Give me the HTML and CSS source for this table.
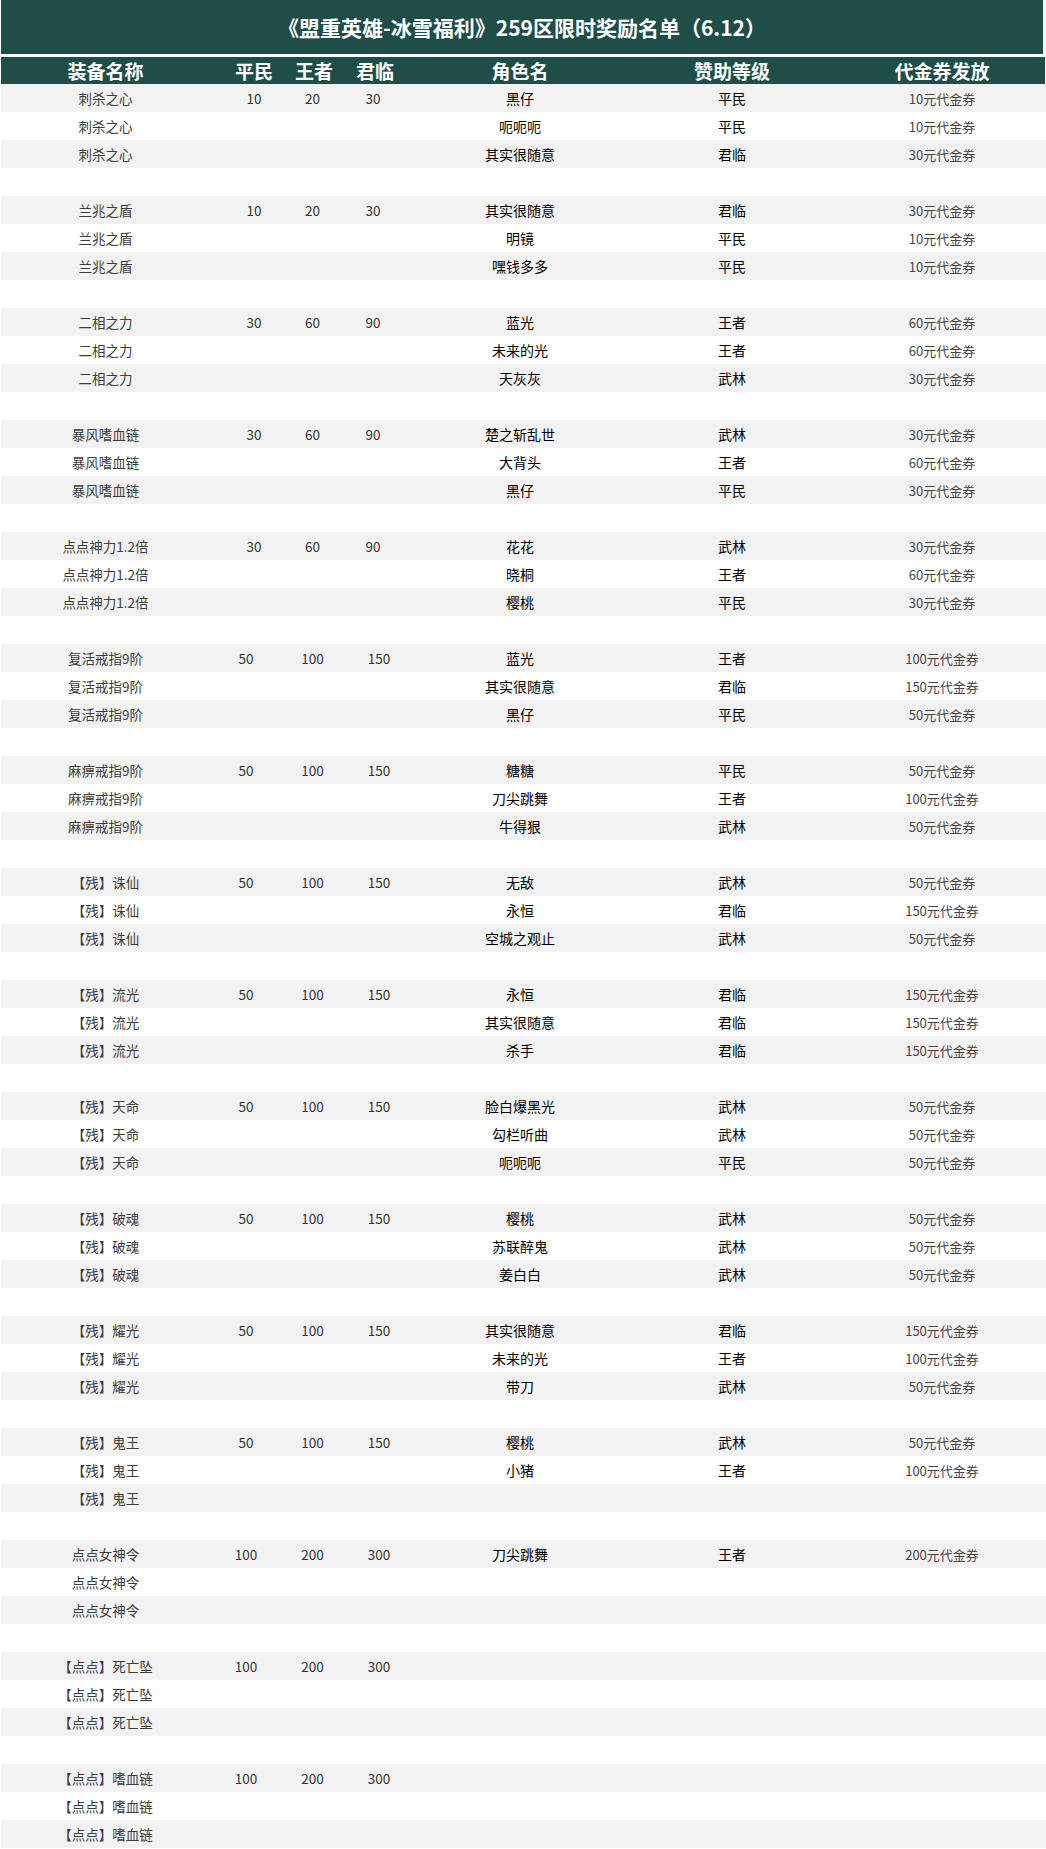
FILE: index.html
```html
<!DOCTYPE html>
<html lang="zh-CN">
<head>
<meta charset="utf-8">
<title>259区限时奖励名单</title>
<link rel="stylesheet" href="styles.css">
</head>
<body>
<div class="sheet">
  <div class="title">《盟重英雄-冰雪福利》259区限时奖励名单（6.12）</div>
  <div class="row head">
    <div class="c">装备名称</div><div class="c">平民</div><div class="c">王者</div><div class="c">君临</div><div class="c">角色名</div><div class="c">赞助等级</div><div class="c">代金券发放</div>
  </div>

  <div class="group">
    <div class="row"><div class="c item">刺杀之心</div><div class="c num">10</div><div class="c num">20</div><div class="c num">30</div><div class="c name">黑仔</div><div class="c name">平民</div><div class="c vou">10元代金券</div></div>
    <div class="row"><div class="c item">刺杀之心</div><div class="c num"></div><div class="c num"></div><div class="c num"></div><div class="c name">呃呃呃</div><div class="c name">平民</div><div class="c vou">10元代金券</div></div>
    <div class="row"><div class="c item">刺杀之心</div><div class="c num"></div><div class="c num"></div><div class="c num"></div><div class="c name">其实很随意</div><div class="c name">君临</div><div class="c vou">30元代金券</div></div>
  </div>
  <div class="gap"></div>

  <div class="group">
    <div class="row"><div class="c item">兰兆之盾</div><div class="c num">10</div><div class="c num">20</div><div class="c num">30</div><div class="c name">其实很随意</div><div class="c name">君临</div><div class="c vou">30元代金券</div></div>
    <div class="row"><div class="c item">兰兆之盾</div><div class="c num"></div><div class="c num"></div><div class="c num"></div><div class="c name">明镜</div><div class="c name">平民</div><div class="c vou">10元代金券</div></div>
    <div class="row"><div class="c item">兰兆之盾</div><div class="c num"></div><div class="c num"></div><div class="c num"></div><div class="c name">嘿钱多多</div><div class="c name">平民</div><div class="c vou">10元代金券</div></div>
  </div>
  <div class="gap"></div>

  <div class="group">
    <div class="row"><div class="c item">二相之力</div><div class="c num">30</div><div class="c num">60</div><div class="c num">90</div><div class="c name">蓝光</div><div class="c name">王者</div><div class="c vou">60元代金券</div></div>
    <div class="row"><div class="c item">二相之力</div><div class="c num"></div><div class="c num"></div><div class="c num"></div><div class="c name">未来的光</div><div class="c name">王者</div><div class="c vou">60元代金券</div></div>
    <div class="row"><div class="c item">二相之力</div><div class="c num"></div><div class="c num"></div><div class="c num"></div><div class="c name">天灰灰</div><div class="c name">武林</div><div class="c vou">30元代金券</div></div>
  </div>
  <div class="gap"></div>

  <div class="group">
    <div class="row"><div class="c item">暴风嗜血链</div><div class="c num">30</div><div class="c num">60</div><div class="c num">90</div><div class="c name">楚之斩乱世</div><div class="c name">武林</div><div class="c vou">30元代金券</div></div>
    <div class="row"><div class="c item">暴风嗜血链</div><div class="c num"></div><div class="c num"></div><div class="c num"></div><div class="c name">大背头</div><div class="c name">王者</div><div class="c vou">60元代金券</div></div>
    <div class="row"><div class="c item">暴风嗜血链</div><div class="c num"></div><div class="c num"></div><div class="c num"></div><div class="c name">黑仔</div><div class="c name">平民</div><div class="c vou">30元代金券</div></div>
  </div>
  <div class="gap"></div>

  <div class="group">
    <div class="row"><div class="c item">点点神力1.2倍</div><div class="c num">30</div><div class="c num">60</div><div class="c num">90</div><div class="c name">花花</div><div class="c name">武林</div><div class="c vou">30元代金券</div></div>
    <div class="row"><div class="c item">点点神力1.2倍</div><div class="c num"></div><div class="c num"></div><div class="c num"></div><div class="c name">晓桐</div><div class="c name">王者</div><div class="c vou">60元代金券</div></div>
    <div class="row"><div class="c item">点点神力1.2倍</div><div class="c num"></div><div class="c num"></div><div class="c num"></div><div class="c name">樱桃</div><div class="c name">平民</div><div class="c vou">30元代金券</div></div>
  </div>
  <div class="gap"></div>

  <div class="group b">
    <div class="row"><div class="c item">复活戒指9阶</div><div class="c num">50</div><div class="c num">100</div><div class="c num">150</div><div class="c name">蓝光</div><div class="c name">王者</div><div class="c vou">100元代金券</div></div>
    <div class="row"><div class="c item">复活戒指9阶</div><div class="c num"></div><div class="c num"></div><div class="c num"></div><div class="c name">其实很随意</div><div class="c name">君临</div><div class="c vou">150元代金券</div></div>
    <div class="row"><div class="c item">复活戒指9阶</div><div class="c num"></div><div class="c num"></div><div class="c num"></div><div class="c name">黑仔</div><div class="c name">平民</div><div class="c vou">50元代金券</div></div>
  </div>
  <div class="gap"></div>

  <div class="group b">
    <div class="row"><div class="c item">麻痹戒指9阶</div><div class="c num">50</div><div class="c num">100</div><div class="c num">150</div><div class="c name">糖糖</div><div class="c name">平民</div><div class="c vou">50元代金券</div></div>
    <div class="row"><div class="c item">麻痹戒指9阶</div><div class="c num"></div><div class="c num"></div><div class="c num"></div><div class="c name">刀尖跳舞</div><div class="c name">王者</div><div class="c vou">100元代金券</div></div>
    <div class="row"><div class="c item">麻痹戒指9阶</div><div class="c num"></div><div class="c num"></div><div class="c num"></div><div class="c name">牛得狠</div><div class="c name">武林</div><div class="c vou">50元代金券</div></div>
  </div>
  <div class="gap"></div>

  <div class="group b">
    <div class="row"><div class="c item">【残】诛仙</div><div class="c num">50</div><div class="c num">100</div><div class="c num">150</div><div class="c name">无敌</div><div class="c name">武林</div><div class="c vou">50元代金券</div></div>
    <div class="row"><div class="c item">【残】诛仙</div><div class="c num"></div><div class="c num"></div><div class="c num"></div><div class="c name">永恒</div><div class="c name">君临</div><div class="c vou">150元代金券</div></div>
    <div class="row"><div class="c item">【残】诛仙</div><div class="c num"></div><div class="c num"></div><div class="c num"></div><div class="c name">空城之观止</div><div class="c name">武林</div><div class="c vou">50元代金券</div></div>
  </div>
  <div class="gap"></div>

  <div class="group b">
    <div class="row"><div class="c item">【残】流光</div><div class="c num">50</div><div class="c num">100</div><div class="c num">150</div><div class="c name">永恒</div><div class="c name">君临</div><div class="c vou">150元代金券</div></div>
    <div class="row"><div class="c item">【残】流光</div><div class="c num"></div><div class="c num"></div><div class="c num"></div><div class="c name">其实很随意</div><div class="c name">君临</div><div class="c vou">150元代金券</div></div>
    <div class="row"><div class="c item">【残】流光</div><div class="c num"></div><div class="c num"></div><div class="c num"></div><div class="c name">杀手</div><div class="c name">君临</div><div class="c vou">150元代金券</div></div>
  </div>
  <div class="gap"></div>

  <div class="group b">
    <div class="row"><div class="c item">【残】天命</div><div class="c num">50</div><div class="c num">100</div><div class="c num">150</div><div class="c name">脸白爆黑光</div><div class="c name">武林</div><div class="c vou">50元代金券</div></div>
    <div class="row"><div class="c item">【残】天命</div><div class="c num"></div><div class="c num"></div><div class="c num"></div><div class="c name">勾栏听曲</div><div class="c name">武林</div><div class="c vou">50元代金券</div></div>
    <div class="row"><div class="c item">【残】天命</div><div class="c num"></div><div class="c num"></div><div class="c num"></div><div class="c name">呃呃呃</div><div class="c name">平民</div><div class="c vou">50元代金券</div></div>
  </div>
  <div class="gap"></div>

  <div class="group b">
    <div class="row"><div class="c item">【残】破魂</div><div class="c num">50</div><div class="c num">100</div><div class="c num">150</div><div class="c name">樱桃</div><div class="c name">武林</div><div class="c vou">50元代金券</div></div>
    <div class="row"><div class="c item">【残】破魂</div><div class="c num"></div><div class="c num"></div><div class="c num"></div><div class="c name">苏联醉鬼</div><div class="c name">武林</div><div class="c vou">50元代金券</div></div>
    <div class="row"><div class="c item">【残】破魂</div><div class="c num"></div><div class="c num"></div><div class="c num"></div><div class="c name">姜白白</div><div class="c name">武林</div><div class="c vou">50元代金券</div></div>
  </div>
  <div class="gap"></div>

  <div class="group b">
    <div class="row"><div class="c item">【残】耀光</div><div class="c num">50</div><div class="c num">100</div><div class="c num">150</div><div class="c name">其实很随意</div><div class="c name">君临</div><div class="c vou">150元代金券</div></div>
    <div class="row"><div class="c item">【残】耀光</div><div class="c num"></div><div class="c num"></div><div class="c num"></div><div class="c name">未来的光</div><div class="c name">王者</div><div class="c vou">100元代金券</div></div>
    <div class="row"><div class="c item">【残】耀光</div><div class="c num"></div><div class="c num"></div><div class="c num"></div><div class="c name">带刀</div><div class="c name">武林</div><div class="c vou">50元代金券</div></div>
  </div>
  <div class="gap"></div>

  <div class="group b">
    <div class="row"><div class="c item">【残】鬼王</div><div class="c num">50</div><div class="c num">100</div><div class="c num">150</div><div class="c name">樱桃</div><div class="c name">武林</div><div class="c vou">50元代金券</div></div>
    <div class="row"><div class="c item">【残】鬼王</div><div class="c num"></div><div class="c num"></div><div class="c num"></div><div class="c name">小猪</div><div class="c name">王者</div><div class="c vou">100元代金券</div></div>
    <div class="row"><div class="c item">【残】鬼王</div><div class="c num"></div><div class="c num"></div><div class="c num"></div><div class="c name"></div><div class="c name"></div><div class="c vou"></div></div>
  </div>
  <div class="gap"></div>

  <div class="group b">
    <div class="row"><div class="c item">点点女神令</div><div class="c num">100</div><div class="c num">200</div><div class="c num">300</div><div class="c name">刀尖跳舞</div><div class="c name">王者</div><div class="c vou">200元代金券</div></div>
    <div class="row"><div class="c item">点点女神令</div><div class="c num"></div><div class="c num"></div><div class="c num"></div><div class="c name"></div><div class="c name"></div><div class="c vou"></div></div>
    <div class="row"><div class="c item">点点女神令</div><div class="c num"></div><div class="c num"></div><div class="c num"></div><div class="c name"></div><div class="c name"></div><div class="c vou"></div></div>
  </div>
  <div class="gap"></div>

  <div class="group b">
    <div class="row"><div class="c item">【点点】死亡坠</div><div class="c num">100</div><div class="c num">200</div><div class="c num">300</div><div class="c name"></div><div class="c name"></div><div class="c vou"></div></div>
    <div class="row"><div class="c item">【点点】死亡坠</div><div class="c num"></div><div class="c num"></div><div class="c num"></div><div class="c name"></div><div class="c name"></div><div class="c vou"></div></div>
    <div class="row"><div class="c item">【点点】死亡坠</div><div class="c num"></div><div class="c num"></div><div class="c num"></div><div class="c name"></div><div class="c name"></div><div class="c vou"></div></div>
  </div>
  <div class="gap"></div>

  <div class="group b">
    <div class="row"><div class="c item">【点点】嗜血链</div><div class="c num">100</div><div class="c num">200</div><div class="c num">300</div><div class="c name"></div><div class="c name"></div><div class="c vou"></div></div>
    <div class="row"><div class="c item">【点点】嗜血链</div><div class="c num"></div><div class="c num"></div><div class="c num"></div><div class="c name"></div><div class="c name"></div><div class="c vou"></div></div>
    <div class="row"><div class="c item">【点点】嗜血链</div><div class="c num"></div><div class="c num"></div><div class="c num"></div><div class="c name"></div><div class="c name"></div><div class="c vou"></div></div>
  </div>
</div>
</body>
</html>
```

FILE: styles.css
```css
html, body {
  margin: 0;
  padding: 0;
  background: #ffffff;
}

body {
  font-family: "Noto Sans CJK SC", "Noto Sans", sans-serif;
}

.sheet {
  width: 1045px;
  padding-left: 1px;
  display: flex;
  flex-direction: column;
}

.title {
  width: 1042px;
  height: 54px;
  background: #1f4e48;
  color: #ffffff;
  font-size: 21px;
  font-weight: 700;
  display: flex;
  align-items: center;
  justify-content: center;
  margin-bottom: 3px;
}

.row {
  display: grid;
  grid-template-columns: 209px 88px 32px 90px 200px 224px 196px;
  height: 28px;
  align-items: center;
}

.row.head {
  height: 27px;
  width: 1044px;
  background: #1f4e48;
  color: #ffffff;
  font-size: 19px;
  font-weight: 700;
}

.c {
  display: flex;
  justify-content: center;
  align-items: center;
  white-space: nowrap;
  min-width: 0;
  height: 100%;
}

.group .row:nth-child(odd) {
  background: #f2f2f2;
}

.gap {
  height: 28px;
}

.item {
  font-size: 13.5px;
  color: #3c3c3c;
}

.num {
  font-size: 13.5px;
  color: #333333;
}

.name {
  font-size: 14px;
  color: #000000;
}

.vou {
  font-size: 13px;
  color: #444444;
}

.group .num:nth-child(3) {
  padding-right: 3px;
}

.group .num:nth-child(4) {
  padding-right: 4px;
}

.group.b .num:nth-child(2) {
  padding-right: 16px;
}

.group.b .num:nth-child(4) {
  padding-right: 0;
  padding-left: 8px;
}
```
